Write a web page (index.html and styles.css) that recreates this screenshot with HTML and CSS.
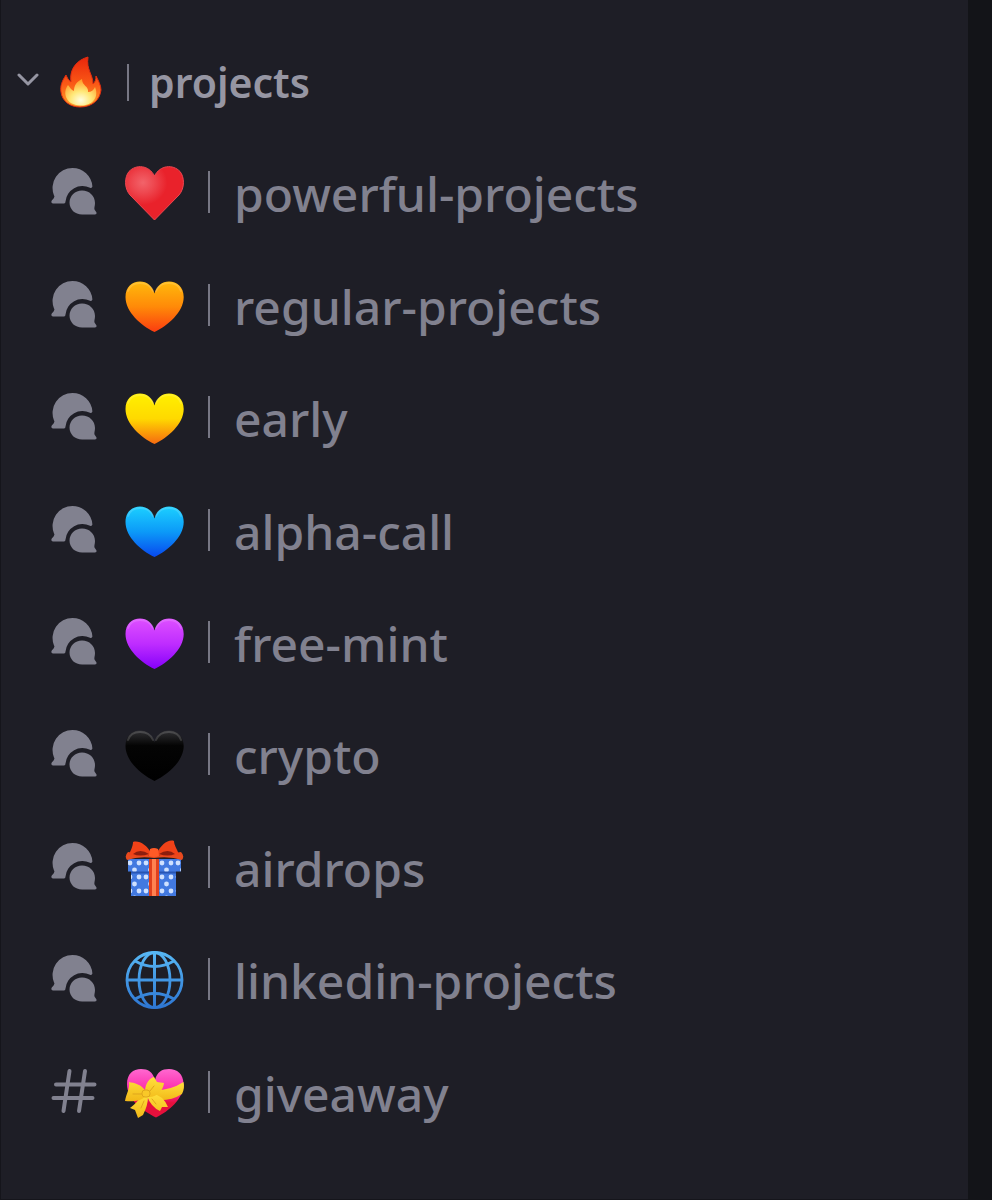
FILE: index.html
```html
<!DOCTYPE html>
<html lang="en">
  <head>
    <meta charset="UTF-8" />
    <meta name="viewport" content="width=device-width, initial-scale=1.0" />
    <title>projects</title>
    <link rel="stylesheet" href="styles.css">
  </head>
  <body>
    <!-- Shared shapes -->
    <svg class="defs" aria-hidden="true">
      <defs>
        <symbol id="forum" viewBox="0 0 46 48">
          <path d="M2 36.500Q-.5 36 .8 33.500Q4.500 30 3 28.500A20 20 0 0 1 21.500 1A20 20 0 0 1 41.400 19.500Q41 21.500 39 20.800A17 17 0 0 0 14.500 34.500Q14.500 36.500 13 36.500Z" />
          <path d="M31 23.500C38.500 23.500 44 29 44 36C44 39 43 41 43.500 42.500L45.500 45.500Q46 47.500 44 47.500H31C24 47.500 18.500 42.500 18.500 35.500C18.500 29 24 23.500 31 23.500Z" />
        </symbol>
        <symbol id="heart" viewBox="0 0 60 60">
          <path d="M29.500 57C16 50.500 .5 37 .5 22C.5 12 7 6.500 15 6.500C22 6.500 27.500 11 29.500 18.500C31.500 11 37 6.500 44 6.500C52 6.500 58.700 12 58.700 22C58.700 37 43 50.500 29.500 57Z" />
          <path d="M3 16C5 10 9 8 15 8C21 8 26 11 28 16M31 16C33 11 38 8 44 8C50 8 54 10 56 16" fill="none" stroke="#fff" stroke-opacity=".15" stroke-width="2" stroke-linecap="round" />
        </symbol>
        <linearGradient id="orange" x1="0" y1="0" x2="0" y2="1">
          <stop offset="0" stop-color="#ffb90c" /><stop offset=".5" stop-color="#ff8a08" /><stop offset="1" stop-color="#fb3c10" />
        </linearGradient>
        <linearGradient id="yellow" x1="0" y1="0" x2="0" y2="1">
          <stop offset="0" stop-color="#fff000" /><stop offset=".5" stop-color="#ffd900" /><stop offset="1" stop-color="#f66a10" />
        </linearGradient>
        <linearGradient id="blue" x1="0" y1="0" x2="0" y2="1">
          <stop offset="0" stop-color="#1cd0ff" /><stop offset=".5" stop-color="#0c9af8" /><stop offset="1" stop-color="#0848ee" />
        </linearGradient>
        <linearGradient id="purple" x1="0" y1="0" x2="0" y2="1">
          <stop offset="0" stop-color="#de50ff" /><stop offset=".5" stop-color="#bf2dff" /><stop offset="1" stop-color="#8500fa" />
        </linearGradient>
        <linearGradient id="black" x1="0" y1="0" x2="0" y2="1">
          <stop offset="0" stop-color="#303033" /><stop offset=".3" stop-color="#040404" /><stop offset="1" stop-color="#000" />
        </linearGradient>
        <radialGradient id="red" cx=".3" cy=".3" r=".42">
          <stop offset="0" stop-color="#f2636a" /><stop offset=".45" stop-color="#ee4850" /><stop offset="1" stop-color="#e9222b" />
        </radialGradient>
        <linearGradient id="pink" x1="0" y1="0" x2="0" y2="1">
          <stop offset="0" stop-color="#ff68d0" /><stop offset=".5" stop-color="#fc22a6" /><stop offset=".7" stop-color="#e6103c" />
        </linearGradient>
        <linearGradient id="gold" x1="0" y1="0" x2="0" y2="1">
          <stop offset="0" stop-color="#ffe03c" /><stop offset="1" stop-color="#f2b818" />
        </linearGradient>
        <linearGradient id="flame" x1="0" y1="0" x2="0" y2="1">
          <stop offset="0" stop-color="#e9260c" /><stop offset=".55" stop-color="#fa5a16" /><stop offset="1" stop-color="#ffa52c" />
        </linearGradient>
        <radialGradient id="core" cx=".5" cy=".8" r=".75">
          <stop offset="0" stop-color="#fffde0" /><stop offset=".45" stop-color="#ffe878" /><stop offset="1" stop-color="#ff9d2b" />
        </radialGradient>
        <linearGradient id="ocean" gradientUnits="userSpaceOnUse" x1="0" y1="2" x2="0" y2="60">
          <stop offset="0" stop-color="#58b9f5" /><stop offset="1" stop-color="#2d75d2" />
        </linearGradient>
        <pattern id="dots" width="16" height="14" patternUnits="userSpaceOnUse" patternTransform="translate(1 22)">
          <rect width="16" height="14" fill="#4279e0" />
          <circle cx="4" cy="4" r="2.400" fill="#cfe1ff" /><circle cx="13" cy="4" r="2.400" fill="#cfe1ff" />
          <circle cx="8.500" cy="11" r="2.400" fill="#cfe1ff" />
        </pattern>
      </defs>
    </svg>

    <nav class="sidebar" aria-label="Channels">
      <button class="category" type="button" aria-expanded="true" aria-controls="channels">
        <svg class="chevron" viewBox="0 0 22 18" aria-hidden="true"><path d="M2 2L11 11L20 2" /></svg>
        <svg class="fire" viewBox="0 0 42 52" aria-hidden="true">
          <path d="M28 1C17 4 9 13 11 26C8 24 7 21 6 19C2 25 0 30 1 36C2 45 10 51 20 51C32 51 40 44 41 34C41 29 38 24 36 20C36 24 35 26 33 28C33 18 26 14 28 1Z" fill="url(#flame)" stroke="#e32c10" />
          <path d="M22 23C16 26 14 30 14 35C11 34 10 31 8 29C2 37 6 49 20 49.500C34 50 39 40 35 31C34 34 31 36 28 36C29 30 22 30 22 23Z" fill="url(#core)" />
        </svg>
        <span class="divider"></span>
        <span class="category-name">projects</span>
      </button>

      <ul class="channels" id="channels">
        <li>
          <a class="channel" href="#powerful-projects">
            <svg class="type" aria-hidden="true"><use href="#forum" /></svg>
            <svg class="emoji" viewBox="0 0 60 60" aria-hidden="true">
              <path d="M29.500 58L5 33C-1 26-.5 15 4 9.500C11 2 24 3 29.500 14C35 3 48 2 55 9.500C59.500 15 60 26 54 33Z" fill="url(#red)" stroke="#f04650" />
            </svg>
            <span class="divider"></span>
            <span class="name">powerful-projects</span>
          </a>
        </li>
        <li>
          <a class="channel" href="#regular-projects">
            <svg class="type" aria-hidden="true"><use href="#forum" /></svg>
            <svg class="emoji" fill="url(#orange)" aria-hidden="true"><use href="#heart" /></svg>
            <span class="divider"></span>
            <span class="name">regular-projects</span>
          </a>
        </li>
        <li>
          <a class="channel" href="#early">
            <svg class="type" aria-hidden="true"><use href="#forum" /></svg>
            <svg class="emoji" fill="url(#yellow)" aria-hidden="true"><use href="#heart" /></svg>
            <span class="divider"></span>
            <span class="name">early</span>
          </a>
        </li>
        <li>
          <a class="channel" href="#alpha-call">
            <svg class="type" aria-hidden="true"><use href="#forum" /></svg>
            <svg class="emoji" fill="url(#blue)" aria-hidden="true"><use href="#heart" /></svg>
            <span class="divider"></span>
            <span class="name">alpha-call</span>
          </a>
        </li>
        <li>
          <a class="channel" href="#free-mint">
            <svg class="type" aria-hidden="true"><use href="#forum" /></svg>
            <svg class="emoji" fill="url(#purple)" aria-hidden="true"><use href="#heart" /></svg>
            <span class="divider"></span>
            <span class="name">free-mint</span>
          </a>
        </li>
        <li>
          <a class="channel" href="#crypto">
            <svg class="type" aria-hidden="true"><use href="#forum" /></svg>
            <svg class="emoji" fill="url(#black)" aria-hidden="true"><use href="#heart" /></svg>
            <span class="divider"></span>
            <span class="name">crypto</span>
          </a>
        </li>
        <li>
          <a class="channel" href="#airdrops">
            <svg class="type" aria-hidden="true"><use href="#forum" /></svg>
            <svg class="emoji" viewBox="0 0 60 60" aria-hidden="true">
              <path d="M6 34H51V59H6Z" fill="url(#dots)" />
              <path d="M3 22H56V34.500H3Z" fill="url(#dots)" />
              <path d="M6 35.500H51" stroke="#2856b4" stroke-width="2" />
              <path d="M24 22H34V59H24Z" fill="#e0401c" />
              <path d="M27 22H31V59H27Z" fill="#ff8150" />
              <path d="M3 15L29 19L56 15Q60 19 57 23Q45 19 29 21Q14 19 2 23Q-1 19 3 15Z" fill="#e84a1e" />
              <path d="M26 16C22 8 14 3 8 5C8 10 5 14 4 18C12 19 19 19 26 18ZM32 16C36 8 43 2 49 4C49 9 53 13 54 18C46 19 39 19 32 18Z" fill="#f04218" />
              <path d="M8 17Q15 11 24 17Q15 20 8 17ZM50 17Q43 11 34 17Q43 20 50 17Z" fill="#8c1d0e" />
              <path d="M25 12Q29 10 33 12L34 19Q29 21 24 19Z" fill="#ff5a26" />
            </svg>
            <span class="divider"></span>
            <span class="name">airdrops</span>
          </a>
        </li>
        <li>
          <a class="channel" href="#linkedin-projects">
            <svg class="type" aria-hidden="true"><use href="#forum" /></svg>
            <svg class="emoji" viewBox="0 0 60 60" fill="none" stroke="url(#ocean)" stroke-width="2.800" aria-hidden="true">
              <circle cx="29.500" cy="31" r="27.500" />
              <ellipse cx="29.500" cy="31" rx="15.500" ry="27.500" />
              <path d="M2 31H57" />
              <path d="M29 3.500H30V58.500H29Z" stroke-width="2" />
              <path d="M10 12Q29.500 23 49 12M10 50Q29.500 39 49 50" />
            </svg>
            <span class="divider"></span>
            <span class="name">linkedin-projects</span>
          </a>
        </li>
        <li>
          <a class="channel" href="#giveaway">
            <svg class="type hash" viewBox="0 0 46 48" aria-hidden="true">
              <path d="M5 17.500H43.500M2.500 31H41.500M18.500 4L12.500 44M34 4L28 44" />
            </svg>
            <svg class="emoji" viewBox="0 0 60 60" aria-hidden="true">
              <path d="M31 55.500C18 49 2 38 2 22C2 12 8 7 16 7C23 7 28 10 30 18C32 10 37 7 44 7C52 7 58.500 12 58.500 22C58.500 37 44 49 31 55.500Z" fill="url(#pink)" />
              <path d="M24 28Q43 30 58.500 20Q60 26 57 32Q43 41 24 37Z" fill="url(#gold)" />
              <path d="M17 33Q12 41 5 46L10 48L13 56L18 53Q23 43 23 35ZM22 34Q26 45 35 49L37 45L43 45Q38 33 26 31Z" fill="url(#gold)" />
              <path d="M21 30C17 22 9 21 4 20C5 27 1 32 0 39C8 40 16 39 21 34ZM20 30C20 21 25 16 29 15L32 20L39 21C38 30 30 36 23 35Z" fill="url(#gold)" />
              <path d="M8 32L17 32M25 29L29 24M19 39L16 46M27 37L31 42" fill="none" stroke="#dfa51c" stroke-linecap="round" />
              <rect x="17" y="28" width="8" height="7" rx="3" fill="#f9c828" stroke="#dfa51c" />
            </svg>
            <span class="divider"></span>
            <span class="name">giveaway</span>
          </a>
        </li>
      </ul>
    </nav>
  </body>
</html>
```
FILE: styles.css
```css
* {
  box-sizing: border-box;
}
body {
  margin: 0;
  padding-right: 24px;
  background-color: #131418;
  color: #81818f;
  font-family: "Noto Sans", "Open Sans", sans-serif;
}
.defs {
  position: absolute;
  width: 0;
  height: 0;
}
.sidebar {
  display: flex;
  flex-direction: column;
  min-height: 100vh;
  padding: 28px 16px 51px;
  background-color: #1e1e26;
  border-left: 1px solid #15151b;
  border-bottom: 1px solid #15151b;
}
.category {
  display: flex;
  align-items: center;
  height: 108px;
  padding: 0;
  border: none;
  background: none;
  color: #9696a3;
  font-family: inherit;
  text-align: left;
  cursor: pointer;
}
.chevron {
  width: 22px;
  height: 18px;
  margin-right: 21px;
  fill: none;
  stroke: currentColor;
  stroke-width: 3px;
  stroke-linecap: round;
  stroke-linejoin: round;
}
.fire {
  width: 42px;
  height: 52px;
  margin-right: 25px;
}
.divider {
  width: 2px;
  height: 42px;
  background-color: #777784;
}
.category .divider {
  height: 37px;
  margin-right: 20px;
}
.category-name {
  font-size: 41px;
  font-weight: 600;
  line-height: 52px;
}
.channels {
  display: grid;
  flex: 1;
  grid-auto-rows: 1fr;
  margin: 0;
  padding: 0;
  list-style: none;
}
.channel {
  display: flex;
  align-items: center;
  height: 100%;
  min-height: 72px;
  padding-left: 34px;
  color: inherit;
  text-decoration: none;
}
.channel:hover {
  color: #dcdce4;
}
.type {
  width: 46px;
  height: 48px;
  margin-right: 28px;
  margin-bottom: 2px;
  fill: #81818f;
}
.hash {
  fill: none;
  stroke: #81818f;
  stroke-width: 4px;
  stroke-linecap: round;
}
.emoji {
  width: 60px;
  height: 60px;
  margin-right: 23px;
}
.name {
  padding-top: 4px;
  padding-left: 24px;
  font-size: 48px;
  font-weight: 500;
  line-height: 60px;
}
```
